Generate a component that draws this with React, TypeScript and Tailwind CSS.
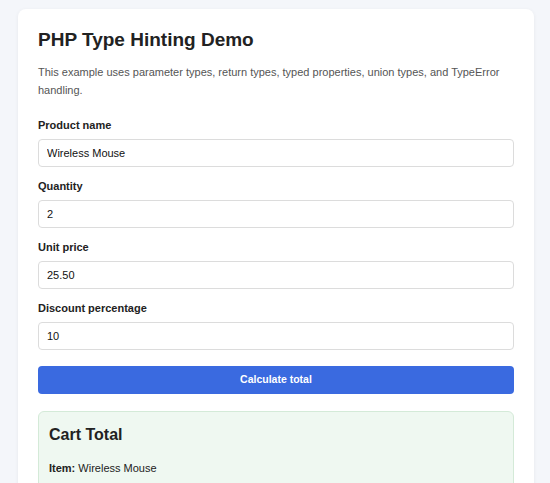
import { useState } from "react";

function Field({ label, value }: { label: string; value: string }) {
  return (
    <div className="mb-[12px]">
      <label className="block text-[11px] font-bold text-[#222] mb-[7px] leading-[14px]">{label}</label>
      <input
        defaultValue={value}
        className="w-full h-[28px] rounded-[4px] border border-[#dcdcdc] bg-white px-[8px] text-[11px] text-[#111] outline-none"
      />
    </div>
  );
}

export default function App() {
  const [fields] = useState([
    { label: "Product name", value: "Wireless Mouse" },
    { label: "Quantity", value: "2" },
    { label: "Unit price", value: "25.50" },
    { label: "Discount percentage", value: "10" },
  ]);

  return (
    <div className="min-h-[483px] bg-[#f4f6fa] pt-[9px] px-[18px] font-['Liberation_Sans',Arial,sans-serif]">
      <div className="w-[516px] bg-white rounded-[8px] shadow-[0_1px_4px_rgba(0,0,0,0.06)] px-[20px] pt-[20px] pb-[20px]">
        <h1 className="text-[19px] font-bold text-[#222] leading-[22px]">PHP Type Hinting Demo</h1>
        <p className="mt-[12px] mb-[19px] text-[11px] leading-[18px] text-[#555]">
          This example uses parameter types, return types, typed properties, union types, and TypeError handling.
        </p>
        {fields.map((f) => (
          <Field key={f.label} label={f.label} value={f.value} />
        ))}
        <button className="mt-[4px] w-full h-[28px] rounded-[4px] bg-[#3a6ae0] text-white text-[10.5px] font-bold">
          Calculate total
        </button>
        <div className="mt-[17px] rounded-[6px] border border-[#d4ead8] bg-[#eff8f1] px-[10px] pt-[13px] pb-[14px]">
          <h2 className="text-[16px] font-bold text-[#222] leading-[20px]">Cart Total</h2>
          <p className="mt-[16px] text-[11px] leading-[14px] text-[#222]">
            <strong>Item:</strong> Wireless Mouse
          </p>
        </div>
      </div>
    </div>
  );
}
